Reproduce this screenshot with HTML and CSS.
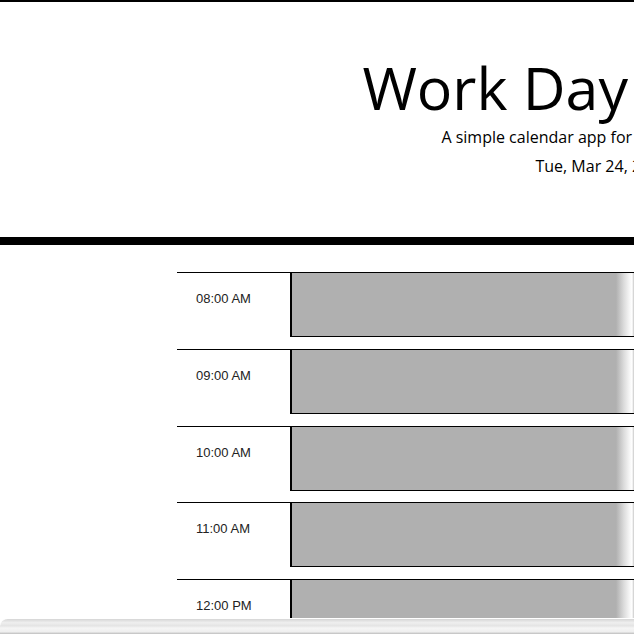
FILE: index.html
```html
<!DOCTYPE html>
<html lang="en">

<head>
  <meta charset="UTF-8">
  <meta name="viewport" content="width=device-width, initial-scale=1.0">
  <title>Work Day Scheduler</title>
  <link rel="stylesheet" href="styles.css">
</head>

<body>

  <div class="page">
    <!-- header -->
    <header class="jumbotron">
      <h1 class="display-3">Work Day Scheduler</h1>
      <p class="lead">A simple calendar app for scheduling your work day</p>
      <p id="currentDay">Tue, Mar 24, 2020</p>
    </header>

    <!-- time blocks -->
    <div class="container" id="timeBlocks">
      <div class="row time-block">
        <div class="hour">08:00 AM</div>
        <textarea class="description past"></textarea>
      </div>
      <div class="row time-block">
        <div class="hour">09:00 AM</div>
        <textarea class="description past"></textarea>
      </div>
      <div class="row time-block">
        <div class="hour">10:00 AM</div>
        <textarea class="description past"></textarea>
      </div>
      <div class="row time-block">
        <div class="hour">11:00 AM</div>
        <textarea class="description past"></textarea>
      </div>
      <div class="row time-block">
        <div class="hour">12:00 PM</div>
        <textarea class="description past"></textarea>
      </div>
    </div>
  </div>

  <div class="scroll-strip"></div>

</body>

</html>
```

FILE: styles.css
```css
html,
body {
  margin: 0;
  height: 100%;
  overflow: hidden;
}

body {
  font-family: "Open Sans", "Liberation Sans", sans-serif;
  font-size: 16px;
  background: #fff;
  color: #000;
  display: flex;
  flex-direction: column;
}

.page {
  flex: 1;
  overflow: hidden;
  border-top: 2px solid #000;
}

.jumbotron {
  width: 1268px;
  text-align: center;
  padding: 49px 0 57px;
  border-bottom: 8px solid #000;
}

.display-3 {
  font-size: 59px;
  font-weight: 400;
  line-height: 72px;
  margin: 0;
  padding-left: 12px;
}

.jumbotron p {
  margin: 0;
  line-height: 27px;
}

.lead {
  padding-top: 1px;
}

#currentDay {
  padding-top: 2px;
  padding-right: 64px;
}

.container {
  padding: 27px 0 0 177px;
}

.row {
  display: flex;
  box-sizing: border-box;
  height: 65px;
  margin-bottom: 11.75px;
  border-top: 1px solid #000;
}

.hour {
  width: 113px;
  box-sizing: border-box;
  padding: 18px 0 0 19px;
  font-family: "Liberation Sans", Arial, sans-serif;
  font-size: 13px;
  color: #222;
}

textarea {
  flex: 1;
  resize: none;
  margin: 0;
  padding: 10px;
  border: none;
  border-left: 2px solid #000;
  border-bottom: 1px solid #000;
}

.past {
  background: linear-gradient(to right, #b0b0b0 calc(100% - 18px), #dcdcdc calc(100% - 10px), #f8f8f8 calc(100% - 4px), #fff calc(100% - 2px), #c8c8c8 100%);
}

.scroll-strip {
  height: 15px;
  border-top: 1px solid #fff;
  border-radius: 8px 0 0 0;
  background: linear-gradient(to bottom, #d6d6d6, #efefef 25%, #e4e4e4 45%, #f5f5f5 60%, #efefef 85%, #bdbdbd);
}
```
